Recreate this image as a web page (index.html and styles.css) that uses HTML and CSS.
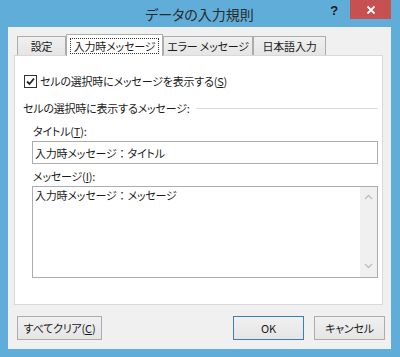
FILE: index.html
```html
<!DOCTYPE html>
<html lang="ja">
<head>
<meta charset="utf-8">
<link rel="stylesheet" href="styles.css">
</head>
<body>
<div class="window">
  <div class="titlebar">
    <div class="tb-left"></div>
    <div class="tb-title">データの入力規則</div>
    <div class="tb-right">
      <span class="help">?</span>
      <span class="close"><svg width="10" height="10" viewBox="0 0 10 10"><path d="M1.5 1.5 L8.5 8.5 M8.5 1.5 L1.5 8.5" stroke="#fff" stroke-width="1.8"/></svg></span>
    </div>
  </div>
  <div class="client">
    <div class="tabs">
      <div class="tab t1">設定</div>
      <div class="tab t2 active"><span class="focus">入力時メッセージ</span></div>
      <div class="tab t3">エラー メッセージ</div>
      <div class="tab t4">日本語入力</div>
    </div>
    <div class="panel">
      <label class="check-row">
        <span class="checkbox"><svg width="11" height="11" viewBox="0 0 11 11"><path d="M2 5.5 L4.5 8 L9 2.5" fill="none" stroke="#222" stroke-width="1.8"/></svg></span>
        <span>セルの選択時にメッセージを表示する(<u>S</u>)</span>
      </label>
      <div class="group-head">
        <span>セルの選択時に表示するメッセージ:</span>
        <span class="rule"></span>
      </div>
      <div class="field">
        <div class="field-label">タイトル(<u>T</u>):</div>
        <div class="input">入力時メッセージ<span class="fw">：</span>タイトル</div>
      </div>
      <div class="field second">
        <div class="field-label">メッセージ(<u>I</u>):</div>
        <div class="textarea">
          <div class="ta-text">入力時メッセージ<span class="fw">：</span>メッセージ</div>
          <div class="scrollbar">
            <svg width="9" height="6" viewBox="0 0 9 6"><path d="M1 5 L4.5 1.5 L8 5" fill="none" stroke="#bdbdbd" stroke-width="1.3"/></svg>
            <svg width="9" height="6" viewBox="0 0 9 6"><path d="M1 1 L4.5 4.5 L8 1" fill="none" stroke="#bdbdbd" stroke-width="1.3"/></svg>
          </div>
        </div>
      </div>
    </div>
    <div class="buttons">
      <button class="btn clear">すべてクリア(<u>C</u>)</button>
      <div class="spacer"></div>
      <button class="btn ok">OK</button>
      <button class="btn">キャンセル</button>
    </div>
  </div>
</div>
</body>
</html>
```
FILE: styles.css
```css
* { box-sizing: border-box; }
html, body { margin: 0; padding: 0; }
body {
  width: 400px;
  height: 357px;
  overflow: hidden;
  font-family: "Noto Sans CJK JP", "Noto Sans", sans-serif;
  font-feature-settings: "palt";
  font-size: 11px;
  letter-spacing: -0.2px;
  color: #1a1a1a;
}
.window {
  width: 400px;
  height: 357px;
  background: #5fadd8;
  display: flex;
  flex-direction: column;
  padding: 0 9px 8px 8px;
}
.titlebar {
  height: 28px;
  display: grid;
  grid-template-columns: 1fr auto 1fr;
  align-items: start;
}
.tb-title {
  font-size: 14px;
  letter-spacing: 0;
  color: #2b2b2b;
  line-height: 1;
  padding-top: 7px;
}
.tb-right {
  display: flex;
  justify-content: flex-end;
  align-items: flex-start;
}
.help {
  font-family: "Liberation Sans", sans-serif;
  font-weight: bold;
  font-size: 13px;
  color: #1a1a1a;
  margin-top: 3px;
  margin-right: 12px;
}
.close {
  width: 41px;
  height: 19px;
  background: #c75050;
  display: flex;
  align-items: center;
  justify-content: center;
}
.client {
  flex: 1;
  background: #f0f0f0;
  display: flex;
  flex-direction: column;
  padding: 7px 6px 9px 6px;
}
.tabs {
  display: flex;
  align-items: flex-end;
  height: 21px;
  padding-left: 3px;
  position: relative;
  z-index: 1;
}
.tab {
  height: 19px;
  border: 1px solid #acacac;
  border-bottom: none;
  background: linear-gradient(#f0f0f0, #e5e5e5);
  display: flex;
  align-items: center;
  justify-content: center;
  white-space: nowrap;
}
.t1 { width: 49px; }
.t2 { width: 97px; }
.t3 { width: 90px; }
.t4 { width: 73px; }
.tab.active {
  height: 22px;
  background: #fff;
  margin-bottom: -1px;
  position: relative;
  z-index: 2;
}
.focus {
  border: 1px dotted #333;
  padding: 0 3px;
  line-height: 14px;
}
.panel {
  height: 250px;
  margin-right: 2px;
  background: #fff;
  border: 1px solid #d9d9d9;
  padding: 0 4px 0 8px;
  display: flex;
  flex-direction: column;
}
.check-row {
  display: flex;
  align-items: center;
  gap: 3px;
  margin-top: 18px;
  height: 14px;
}
.checkbox {
  width: 13px;
  height: 13px;
  border: 1px solid #333;
  background: #fff;
  display: flex;
  align-items: center;
  justify-content: center;
  margin-left: 1px;
}
.group-head {
  display: flex;
  align-items: center;
  gap: 6px;
  margin-top: 13px;
  height: 14px;
}
.rule {
  flex: 1;
  height: 1px;
  background: #dcdcdc;
}
.field {
  padding-left: 9px;
  margin-top: 9px;
  display: flex;
  flex-direction: column;
}
.field.second { margin-top: 5px; }
.field-label {
  height: 14px;
  line-height: 14px;
  padding-left: 1px;
}
.input {
  margin-top: 3px;
  height: 23px;
  border: 1px solid #abadb3;
  padding: 0 2px;
  display: flex;
  align-items: center;
  color: #1a1a1a;
}
.fw {
  font-feature-settings: normal;
  letter-spacing: 0;
}
.textarea {
  margin-top: 3px;
  height: 92px;
  border: 1px solid #abadb3;
  display: flex;
}
.ta-text {
  flex: 1;
  padding: 1px 2px;
  line-height: 15px;
}
.scrollbar {
  width: 17px;
  background: #f0f0f0;
  display: flex;
  flex-direction: column;
  justify-content: space-between;
  align-items: center;
  padding: 7px 0 8px;
}
.buttons {
  display: flex;
  margin-top: 11px;
  height: 24px;
  gap: 10px;
}
.spacer { flex: 1; }
.btn {
  font: inherit;
  font-feature-settings: "palt";
  letter-spacing: -0.2px;
  color: #1a1a1a;
  height: 24px;
  width: 71px;
  border: 1px solid #acacac;
  background: linear-gradient(#f0f0f0, #e5e5e5);
  padding: 0;
  margin: 0;
}
.btn.clear { width: 85px; margin-left: 3px; }
.btn.ok { border-color: #3c7fb1; }
```
